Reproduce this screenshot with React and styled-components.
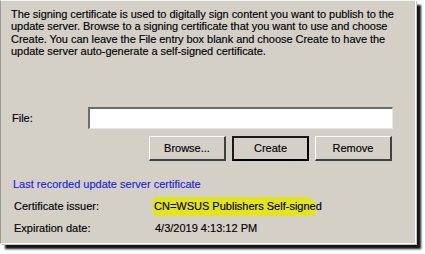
import React from 'react';
import styled, { createGlobalStyle } from 'styled-components';

const GlobalStyle = createGlobalStyle`
  html, body {
    margin: 0;
    padding: 0;
    background: #ffffff;
  }
`;

const Page = styled.div`
  width: 425px;
  height: 254px;
  background: #ffffff;
  overflow: hidden;
`;

const Dialog = styled.div`
  box-sizing: border-box;
  width: 416px;
  height: 244px;
  background: #d4d0c8;
  border-left: 1px solid #9c9a94;
  border-top: 1px solid #f4f4f0;
  border-right: 1px solid #ffffff;
  border-bottom: 1px solid #ffffff;
  box-shadow: 1px 1px 0 #c8c6c0, 5px 5px 2px rgba(0, 0, 0, 0.92);
  padding: 7px 10px 0 10px;
  font-family: "Liberation Sans", Arial, sans-serif;
  font-size: 11px;
  color: #000;
  -webkit-text-stroke: 0.15px #000;
  display: flex;
  flex-direction: column;
`;

const Intro = styled.p`
  margin: 0;
  line-height: 12.4px;
  letter-spacing: -0.05px;
  white-space: nowrap;
`;

const FileRow = styled.div`
  display: flex;
  align-items: center;
  margin-top: 49px;
`;

const Label = styled.span`
  width: ${props => props.width}px;
  flex-shrink: 0;
  padding-left: 1px;
`;

const TextBox = styled.div`
  box-sizing: border-box;
  width: 305px;
  height: 22px;
  background: #ffffff;
  border-top: 2px solid #6e6c68;
  border-left: 2px solid #6e6c68;
  border-right: 1px solid #e8e6e2;
  border-bottom: 1px solid #e8e6e2;
`;

const ButtonRow = styled.div`
  display: flex;
  gap: 6px;
  margin-top: 7px;
  padding-left: 138px;
`;

const Button = styled.div`
  box-sizing: border-box;
  width: 77px;
  height: 25px;
  display: flex;
  align-items: center;
  justify-content: center;
  background: #d4d0c8;
  border-top: 1px solid #ffffff;
  border-left: 1px solid #ffffff;
  border-right: 2px solid #404040;
  border-bottom: 2px solid #404040;
  ${props => props.isDefault && `
    border: 2px solid #000;
    border-top-color: #1a1a1a;
    border-left-color: #1a1a1a;
  `}
`;

const LinkText = styled.div`
  color: #1c1ce0;
  -webkit-text-stroke: 0.15px #1c1ce0;
  margin-top: 17px;
  padding-left: 2px;
`;

const InfoRow = styled.div`
  display: flex;
  align-items: center;
  margin-top: ${props => props.gap}px;
  padding-left: 2px;
`;

const Highlight = styled.span`
  padding: 3px 0 4px 1px;
  margin-left: -2px;
  background: #e2e41c;
  border-radius: 2px 10px 4px 3px;
`;

export default function App() {
  return (
    <Page>
      <GlobalStyle />
      <Dialog>
        <Intro>
          The signing certificate is used to digitally sign content you want to publish to the<br />
          update server. Browse to a signing certificate that you want to use and choose<br />
          Create. You can leave the File entry box blank and choose Create to have the<br />
          update server auto-generate a self-signed certificate.
        </Intro>
        <FileRow>
          <Label width={76}>File:</Label>
          <TextBox />
        </FileRow>
        <ButtonRow>
          <Button>Browse...</Button>
          <Button isDefault>Create</Button>
          <Button>Remove</Button>
        </ButtonRow>
        <LinkText>Last recorded update server certificate</LinkText>
        <InfoRow gap={10}>
          <Label width={141}>Certificate issuer:</Label>
          <span>
            <Highlight>CN=WSUS Publishers Self-signe</Highlight>d
          </span>
        </InfoRow>
        <InfoRow gap={10}>
          <Label width={141}>Expiration date:</Label>
          <span>4/3/2019 4:13:12 PM</span>
        </InfoRow>
      </Dialog>
    </Page>
  );
}
